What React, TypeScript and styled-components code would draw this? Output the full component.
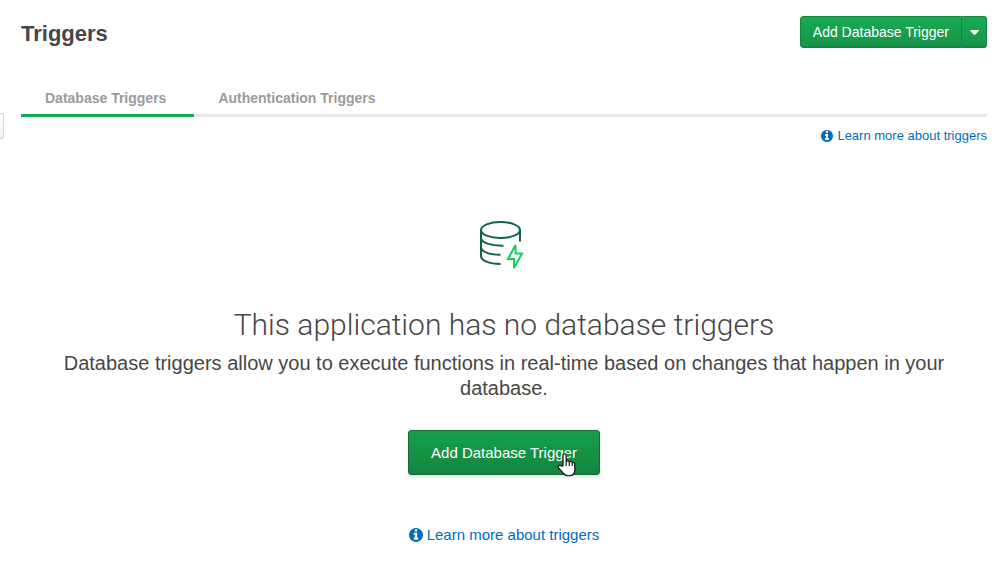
import React from "react";
import styled, { createGlobalStyle } from "styled-components";

const GlobalStyle = createGlobalStyle`
  *, *::before, *::after { box-sizing: border-box; }
  body {
    margin: 0;
    background: #fff;
    color: #464646;
    font-family: "Liberation Sans", Arial, sans-serif;
  }
`;

const Page = styled.main`
  position: relative;
  padding: 16px 17px 20px 21px;
`;

const PanelHandle = styled.button`
  position: absolute;
  left: 0;
  top: 113px;
  width: 4px;
  height: 26px;
  padding: 0;
  border: 1px solid #d5d5d5;
  border-left: 0;
  border-radius: 0 3px 3px 0;
  background: linear-gradient(#fff, #f2f2f2);
`;

const Header = styled.header`
  display: flex;
  align-items: flex-start;
  justify-content: space-between;
`;

const Title = styled.h1`
  margin: 0;
  font-size: 22px;
  line-height: 36px;
  font-weight: 700;
`;

const ButtonGroup = styled.div`
  display: flex;
`;

const Button = styled.button<{ $size: "small" | "large" }>`
  height: ${(p) => (p.$size === "large" ? 45 : 32)}px;
  padding: 0 ${(p) => (p.$size === "large" ? 22 : 12)}px;
  border: 1px solid ${(p) => (p.$size === "large" ? "#116b36" : "#138644")};
  border-radius: 3px;
  background: ${(p) =>
    p.$size === "large"
      ? "linear-gradient(#16a04c, #15843f)"
      : "linear-gradient(#17ab53, #199448)"};
  box-shadow: ${(p) =>
    p.$size === "large"
      ? "0 2px 3px rgba(0, 0, 0, 0.1)"
      : "inset 0 -1px 0 #138644"};
  color: #fff;
  font-family: inherit;
  font-size: ${(p) => (p.$size === "large" ? 15 : 14)}px;
  cursor: pointer;

  ${ButtonGroup} > &:first-child {
    border-radius: 3px 0 0 3px;
  }
  ${ButtonGroup} > & + & {
    display: flex;
    align-items: center;
    justify-content: center;
    width: 25px;
    padding: 0;
    border-left: 0;
    border-radius: 0 3px 3px 0;
  }
`;

const Tabs = styled.nav`
  display: flex;
  margin-top: 28px;
  box-shadow: inset 0 -3px 0 #e9e9eb;
`;

const Tab = styled.a<{ $active?: boolean }>`
  padding: 9px 28px 7px 24px;
  border-bottom: 3px solid ${(p) => (p.$active ? "#13aa52" : "transparent")};
  color: #9b9b9b;
  font-size: 14px;
  line-height: 18px;
  font-weight: 700;
  text-decoration: none;
`;

const HelpRow = styled.div`
  display: flex;
  justify-content: flex-end;
  margin-top: 9px;
`;

const HelpLink = styled.a<{ $size: "small" | "large" }>`
  display: inline-flex;
  align-items: center;
  gap: 4px;
  color: #006cbc;
  font-size: ${(p) => (p.$size === "large" ? 15 : 13)}px;
  line-height: 20px;
  text-decoration: none;
`;

const EmptyState = styled.section`
  display: flex;
  flex-direction: column;
  align-items: center;
  padding: 73px 32px 0;
  text-align: center;
`;

const EmptyTitle = styled.h2`
  margin: 36px 0 0;
  font-family: Roboto, "Liberation Sans", sans-serif;
  font-size: 30px;
  line-height: 40px;
  font-weight: 300;
`;

const EmptyText = styled.p`
  margin: 6px 0 29px;
  font-size: 20px;
  line-height: 25px;
`;

const EmptyHelp = styled.div`
  margin-top: 50px;
`;

const PointerAnchor = styled.div`
  position: relative;
`;

const Pointer = styled.svg`
  position: absolute;
  right: 24px;
  top: 22px;
  pointer-events: none;
`;

const TriggerIcon = () => (
  <svg width="54" height="50" viewBox="0 0 54 50" fill="none" strokeWidth="2" aria-hidden="true">
    <g stroke="#116149">
      <ellipse cx="23.500" cy="11" rx="19.500" ry="8" />
      <path d="M4 11v26c0 4.500 8 7.800 19.500 8" />
      <path d="M4 19c0 4.500 10 8 22.500 7.700" />
      <path d="M4 28c0 4.500 8 7.800 19.500 7.700" />
      <path d="M43 11v11.500" />
    </g>
    <path d="M38.500 26l-7.500 14h6v9l8-14.500h-6.500z" stroke="#13cf5f" />
  </svg>
);

const InfoIcon = ({ size }: { size: number }) => (
  <svg width={size} height={size} viewBox="0 128 1536 1536" fill="currentColor" aria-hidden="true">
    <path d="M1024 1376v-160q0-14-9-23t-23-9h-96v-512q0-14-9-23t-23-9h-320q-14 0-23 9t-9 23v160q0 14 9 23t23 9h96v320h-96q-14 0-23 9t-9 23v160q0 14 9 23t23 9h448q14 0 23-9t9-23zm-128-896v-192q0-14-9-23t-23-9h-192q-14 0-23 9t-9 23v192q0 14 9 23t23 9h192q14 0 23-9t9-23zm640 416q0 209-103 385.500t-279.500 279.500-385.500 103-385.500-103-279.500-279.500-103-385.500 103-385.500 279.500-279.500 385.500-103 385.500 103 279.500 279.500 103 385.500z" />
  </svg>
);

const CaretIcon = () => (
  <svg width="9" height="5" viewBox="0 0 9 5" fill="currentColor" aria-hidden="true">
    <path d="M.3 0h8.400q.5.200.1.700L5 4.700q-.5.400-1 0L.2.700Q-.2.200.3 0z" />
  </svg>
);

const HandPointer = () => (
  <Pointer width="19" height="25" viewBox="0 0 19 25" aria-hidden="true">
    <path
      d="M6 14V3.500a1.600 1.600 0 0 1 3.200 0V9.500c.3-1 2.900-1 3.100.5.500-1 2.800-.8 3 .8.700-.8 2.500-.3 2.500 1.400v5.500c0 3.700-2 6-5.500 6h-1.800c-2.300 0-3.600-1.200-4.700-3L1.500 16c-1.200-1.800.8-3.300 2.200-2.300z"
      fill="#fff"
      stroke="#1b1b24"
      strokeWidth="1.300"
      strokeLinejoin="round"
    />
    <path d="M9.200 9.500v4.500M12.300 10v4M15.300 11v3" stroke="#1b1b24" strokeWidth="1.200" />
  </Pointer>
);

export default function App() {
  return (
    <>
      <GlobalStyle />
      <Page>
        <PanelHandle aria-label="Expand navigation" />
        <Header>
          <Title>Triggers</Title>
          <ButtonGroup>
            <Button $size="small">Add Database Trigger</Button>
            <Button $size="small" aria-label="More trigger types">
              <CaretIcon />
            </Button>
          </ButtonGroup>
        </Header>
        <Tabs>
          <Tab href="#database" $active aria-current="page">
            Database Triggers
          </Tab>
          <Tab href="#authentication">Authentication Triggers</Tab>
        </Tabs>
        <HelpRow>
          <HelpLink href="#learn" $size="small">
            <InfoIcon size={12} />
            Learn more about triggers
          </HelpLink>
        </HelpRow>
        <EmptyState>
          <TriggerIcon />
          <EmptyTitle>This application has no database triggers</EmptyTitle>
          <EmptyText>
            Database triggers allow you to execute functions in real-time based on changes that
            happen in your database.
          </EmptyText>
          <PointerAnchor>
            <Button $size="large">Add Database Trigger</Button>
            <HandPointer />
          </PointerAnchor>
          <EmptyHelp>
            <HelpLink href="#learn" $size="large">
              <InfoIcon size={14} />
              Learn more about triggers
            </HelpLink>
          </EmptyHelp>
        </EmptyState>
      </Page>
    </>
  );
}
